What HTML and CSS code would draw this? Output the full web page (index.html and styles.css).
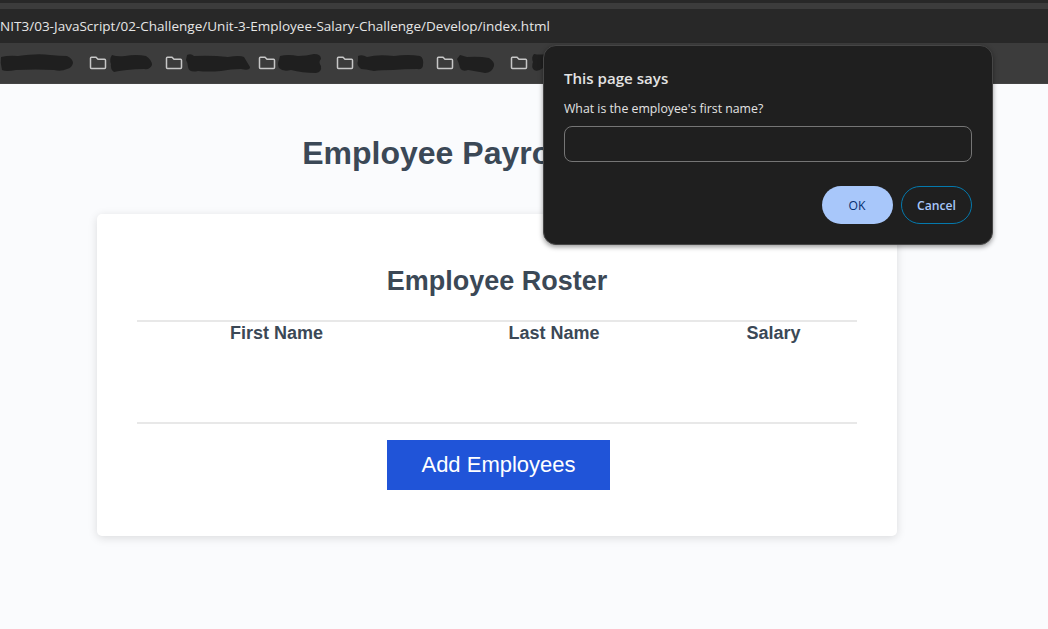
FILE: index.html
```
<!DOCTYPE html>
<html lang="en">
<head>
<meta charset="utf-8">
<title>Employee Payroll Tracker</title>
<link rel="stylesheet" href="styles.css">
</head>
<body>
<svg class="defs" width="0" height="0"><defs>
<symbol id="folder" viewBox="0 0 18 14"><path d="M2.400 1.300h4.600l2 2h6.600q.9 0 .9.9v7.400q0 .9-.9.9h-13.200q-.9 0-.9-.9v-9.400q0-.9.9-.9z"/></symbol>
</defs></svg>
<div class="tabstrip"></div>
<div class="addressbar"><span class="url">NIT3/03-JavaScript/02-Challenge/Unit-3-Employee-Salary-Challenge/Develop/index.html</span></div>
<nav class="bookmarks">
<svg class="mark first" width="89" height="22"><path d="M1 4Q9 2 18 3Q38 0 50 2Q60 3 67 3Q73 6 73 10Q72 15 67 16Q61 19 54 17Q36 16 16 17Q6 19 2 17Q0 10 1 4Z"/></svg>
<svg class="folder"><use href="#folder"/></svg>
<svg class="mark" width="58" height="22"><path d="M5 2Q10 4 18 3Q29 1 39 3Q45 7 45 12Q43 17 37 16Q28 16 20 17Q11 18 7 19Q3 16 4 11Q2 6 5 2Z"/></svg>
<svg class="folder"><use href="#folder"/></svg>
<svg class="mark" width="75" height="22"><path d="M4 2Q8 0 11 3Q28 2 45 4Q57 2 61 4L67 14Q67 18 58 16Q48 16 38 18Q25 19 15 18Q6 20 5 14Q5 10 3 7Z"/></svg>
<svg class="folder"><use href="#folder"/></svg>
<svg class="mark" width="60" height="22"><path d="M4 3Q12 1 22 3Q30 3 38 1Q45 1 45 6Q42 9 45 13Q46 19 40 20Q26 20 15 17Q7 19 3 15Q1 11 3 7Z"/></svg>
<svg class="folder"><use href="#folder"/></svg>
<svg class="mark" width="82" height="22"><path d="M4 3Q8 1 13 4Q24 1 40 3Q54 1 66 3Q70 5 69 12Q69 17 63 16Q50 16 39 17Q27 17 20 18Q11 16 7 16Q2 12 4 8Z"/></svg>
<svg class="folder"><use href="#folder"/></svg>
<svg class="mark" width="56" height="22"><path d="M6 2L13 4Q25 3 35 5Q41 9 40 13Q38 20 31 20Q20 18 14 17Q8 19 6 15Q5 10 3 6Z"/></svg>
<svg class="folder"><use href="#folder"/></svg>
<svg class="mark" width="35" height="22"><path d="M6 1Q12 2 18 1H35V15H15Q10 19 6 17Q3 14 5 9Q3 4 6 1Z"/></svg>
</nav>
<main class="page">
<h1>Employee Payroll Tracker</h1>
<section class="card">
<h2>Employee Roster</h2>
<div class="roster"><span>First Name</span><span>Last Name</span><span>Salary</span></div>
<button class="add">Add Employees</button>
</section>
</main>
<div class="dialog" role="dialog">
<div class="title"><span>This page says</span></div>
<label class="message" for="answer"><span>What is the employee's first name?</span></label>
<input id="answer" type="text">
<div class="actions"><button class="ok">OK</button><button class="cancel">Cancel</button></div>
</div>
</body>
</html>
```
FILE: styles.css
```
* { box-sizing: border-box; }
body { margin: 0; width: 1048px; height: 629px; overflow: hidden; background: #fafbfd; color: #3b4856; font-family: "Liberation Sans", Arial, sans-serif; }
.defs { position: absolute; }
.tabstrip { height: 9px; background: #3c3c3c; border-top: 3px solid #282828; }
.addressbar { height: 34px; background: #282828; color: #e6e6e6; font: 13.5px/34px "Open Sans", "Noto Sans", sans-serif; white-space: nowrap; }
.url { letter-spacing: 0.02px; }
.bookmarks { display: flex; height: 41px; padding-top: 9px; background: #3c3c3c; border-bottom: 1px solid #444; }
.folder { flex: none; width: 18px; height: 14px; margin-top: 4px; fill: none; stroke: #c7c7c7; stroke-width: 1.5; }
.mark { flex: none; margin-top: 1px; fill: #1f1f1f; }
.page { display: flex; flex-direction: column; width: 800px; margin-left: 97px; }
h1 { margin: 50px 0 0; height: 80px; font-size: 32px; line-height: 38px; text-align: center; white-space: nowrap; }
.card { display: flex; flex-direction: column; align-items: center; height: 322px; padding: 49px 40px 0; background: #fff; border-radius: 5px; box-shadow: 0 2px 10px rgba(0,0,0,.13); }
h2 { margin: 0; height: 57px; font-size: 27px; line-height: 36px; white-space: nowrap; }
.roster { display: grid; grid-template-columns: 279px 276px 163px; width: 720px; height: 104px; padding-top: 1px; border-top: 2px solid #e8e8e8; border-bottom: 2px solid #e8e8e8; font-size: 18px; font-weight: bold; line-height: 21px; text-align: center; }
.add { width: 223px; height: 50px; margin: 16px 0 0 3px; padding: 0; border: 0; background: #2054d8; color: #fff; font: 22px "Liberation Sans", Arial, sans-serif; white-space: nowrap; }
.dialog { position: absolute; left: 543px; top: 45px; width: 450px; height: 200px; padding: 21px 20px 0; border: 1px solid #464646; border-radius: 13px; background: #1f1f1f; color: #e3e3e3; box-shadow: 0 2px 5px rgba(0,0,0,.4); font-family: "Open Sans", "Noto Sans", sans-serif; display: flex; flex-direction: column; }
.title { height: 32px; font-size: 15.1px; font-weight: 600; line-height: 22px; }
.message { height: 27px; font-size: 12.3px; line-height: 20px; }
input { width: 408px; height: 36px; border: 1px solid #757575; border-radius: 8px; background: transparent; color: #e3e3e3; }
.actions { display: flex; justify-content: flex-end; gap: 8px; margin-top: 24px; }
.actions button { width: 71px; height: 38px; padding: 0; border-radius: 19px; font: 600 12.2px "Open Sans", "Noto Sans", sans-serif; }
.actions .ok { border: 0; padding-right: 1px; background: #a8c7fa; color: #062e6f; font-weight: 500; }
.cancel { border: 1px solid #0479ad; background: transparent; color: #a8c7fa; }
```
